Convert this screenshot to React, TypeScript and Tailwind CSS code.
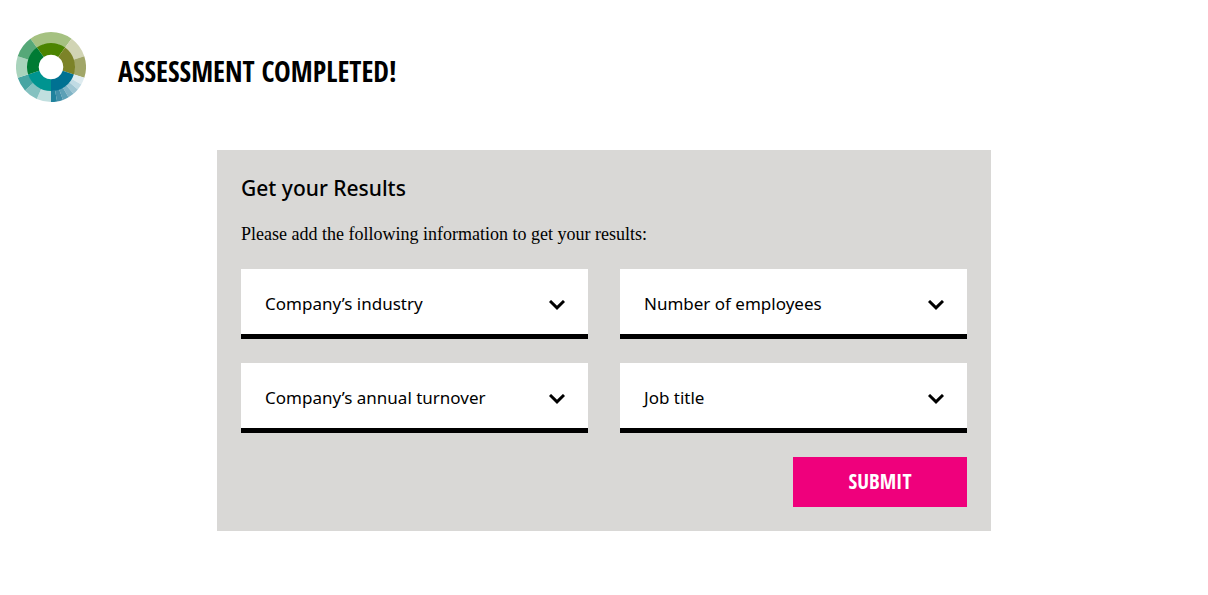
import { useId, useState } from "react";

interface Segment {
  from: number;
  to: number;
  color: string;
}

const innerRing: Segment[] = [
  { from: -36, to: 36, color: "#4b8400" },
  { from: 36, to: 108, color: "#7c8328" },
  { from: 108, to: 180, color: "#007192" },
  { from: 180, to: 252, color: "#009490" },
  { from: 252, to: 324, color: "#007b34" },
];

const outerRing: Segment[] = [
  { from: -36, to: 36, color: "#a5c181" },
  { from: 36, to: 72, color: "#d1d4b4" },
  { from: 72, to: 108, color: "#a1a668" },
  { from: 108, to: 120, color: "#deebef" },
  { from: 120, to: 130, color: "#c0dbe4" },
  { from: 130, to: 140, color: "#9fc6d3" },
  { from: 140, to: 150, color: "#80b4c6" },
  { from: 150, to: 160, color: "#5ca0b6" },
  { from: 160, to: 170, color: "#408fa9" },
  { from: 170, to: 180, color: "#20829d" },
  { from: 180, to: 204, color: "#c1dfdf" },
  { from: 204, to: 228, color: "#84c1c0" },
  { from: 228, to: 252, color: "#48a5a3" },
  { from: 252, to: 288, color: "#a9d3bc" },
  { from: 288, to: 324, color: "#56a878" },
];

function point(radius: number, degrees: number) {
  const angle = (degrees * Math.PI) / 180;
  return `${35 + radius * Math.sin(angle)} ${35 - radius * Math.cos(angle)}`;
}

function segmentPath({ from, to }: Segment, inner: number, outer: number) {
  return `M${point(outer, from)} A${outer} ${outer} 0 0 1 ${point(outer, to)} L${point(inner, to)} A${inner} ${inner} 0 0 0 ${point(inner, from)} Z`;
}

function Logo() {
  return (
    <svg viewBox="0 0 70 70" className="size-[70px] shrink-0" aria-hidden="true">
      {outerRing.map((segment) => (
        <path key={segment.from} d={segmentPath(segment, 23.5, 35)} fill={segment.color} />
      ))}
      {innerRing.map((segment) => (
        <path key={segment.from} d={segmentPath(segment, 12.3, 24)} fill={segment.color} />
      ))}
    </svg>
  );
}

interface SelectFieldProps {
  label: string;
  options: string[];
}

function SelectField({ label, options }: SelectFieldProps) {
  const id = useId();
  const [value, setValue] = useState("");

  return (
    <div className="relative font-['Noto_Sans','Open_Sans',sans-serif] text-[17px] text-black">
      <select
        id={id}
        value={value}
        onChange={(e) => setValue(e.target.value)}
        className="block h-[70px] w-full appearance-none rounded-none border-b-5 border-black bg-white pt-1 pr-14 pl-6"
      >
        <option value=""></option>
        {options.map((option) => (
          <option key={option}>{option}</option>
        ))}
      </select>
      {/* acts as the placeholder until something is picked */}
      <label
        htmlFor={id}
        className={`pointer-events-none absolute inset-x-6 top-0 leading-[70px] ${value ? "opacity-0" : ""}`}
      >
        {label}
      </label>
      <svg
        viewBox="0 0 16 10"
        className="pointer-events-none absolute top-[31px] right-[23px] h-[10px] w-4"
        fill="none"
        stroke="black"
        strokeWidth="3"
        aria-hidden="true"
      >
        <path d="M1 1 8 7.8 15 1" />
      </svg>
    </div>
  );
}

export default function App() {
  return (
    <div className="min-h-screen bg-white text-black">
      <header className="flex items-center gap-8 px-4 pt-8">
        <Logo />
        <h1 className="pt-2 font-['Open_Sans_Condensed','Roboto_Condensed',sans-serif] text-[28px] leading-10 font-medium">
          ASSESSMENT COMPLETED!
        </h1>
      </header>
      <main className="mx-auto mt-12 max-w-[774px] bg-[#d9d8d6] p-6">
        <h2 className="font-['Noto_Sans','Open_Sans',sans-serif] text-[21px] leading-7 font-medium">
          Get your Results
        </h2>
        <p className="mt-5 font-['Liberation_Serif',serif] text-lg leading-6">
          Please add the following information to get your results:
        </p>
        <form className="mt-[23px]" onSubmit={(e) => e.preventDefault()}>
          <div className="grid gap-x-8 gap-y-6 sm:grid-cols-2">
            <SelectField
              label="Company’s industry"
              options={["Finance", "Manufacturing", "Retail", "Technology"]}
            />
            <SelectField label="Number of employees" options={["1-49", "50-249", "250+"]} />
            <SelectField
              label="Company’s annual turnover"
              options={["Under 10 million", "10-50 million", "Over 50 million"]}
            />
            <SelectField label="Job title" options={["Executive", "Manager", "Specialist"]} />
          </div>
          <div className="mt-6 flex justify-end">
            <button
              type="submit"
              className="h-[50px] w-[174px] bg-[#ef007c] font-['Open_Sans_Condensed','Roboto_Condensed',sans-serif] text-[21px] font-medium text-white"
            >
              SUBMIT
            </button>
          </div>
        </form>
      </main>
    </div>
  );
}
